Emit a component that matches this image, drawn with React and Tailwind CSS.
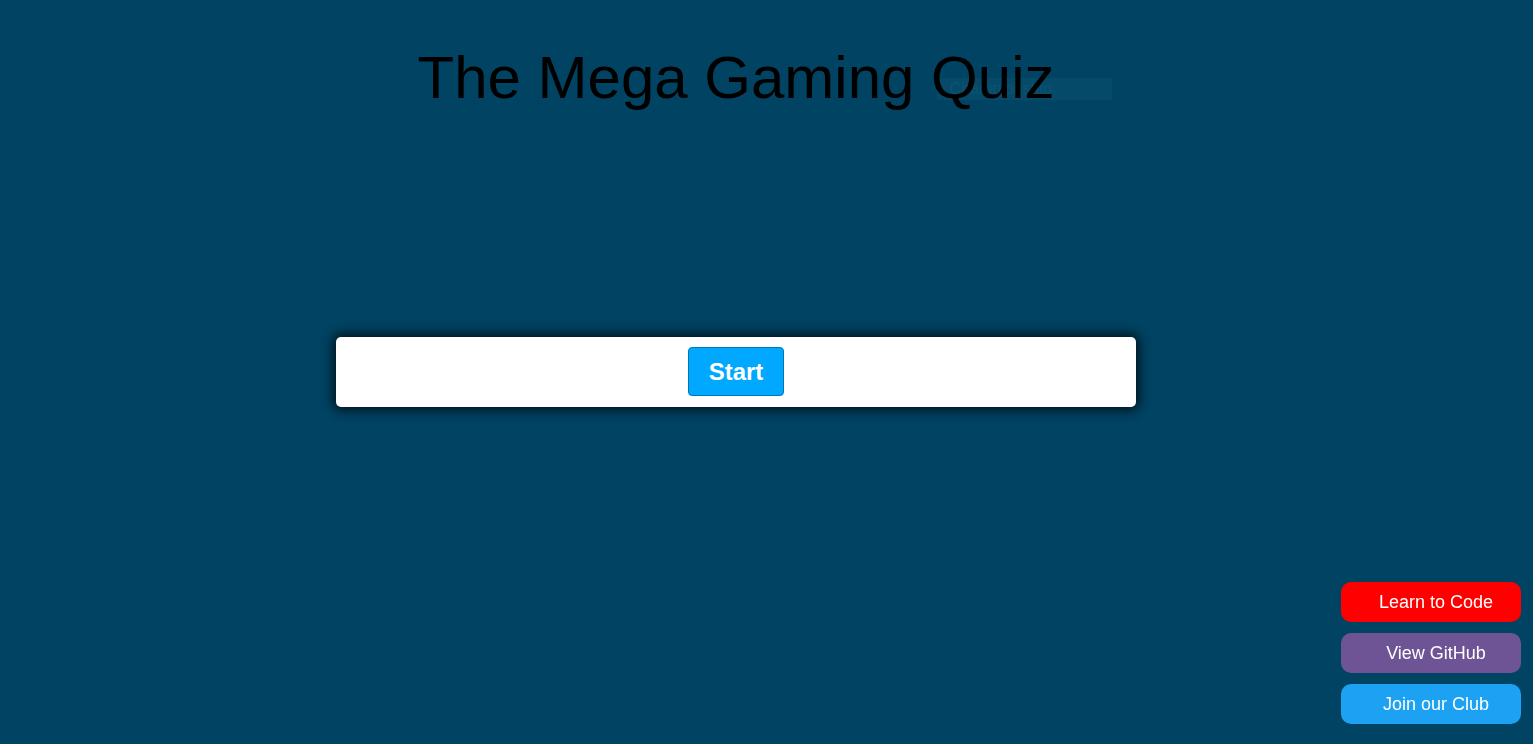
import React from "react";

export default function App() {
  return (
    <div
      className="relative w-full h-[744px] bg-[#004363] overflow-hidden"
      style={{ fontFamily: '"Liberation Sans", Arial, sans-serif' }}
    >
      <div className="w-[1472px] h-full flex flex-col items-center">
        <div className="relative mt-[43px] h-[69px] flex items-start">
          <div className="absolute left-[519px] top-[35px] w-[175px] h-[22px] bg-[#064a69] flex items-center pl-[13px] text-[16px] text-[#0b5373]">
            Championship
          </div>
          <h1 className="relative text-[60px] leading-[69px] text-black font-normal whitespace-nowrap">
            The Mega Gaming Quiz
          </h1>
        </div>
        <div className="mt-[225px] w-[800px] h-[70px] bg-white rounded-[5px] shadow-[0_0_12px_3px_rgba(0,0,0,0.75)] flex justify-center pt-[10px]">
          <button className="h-[49px] px-[20px] bg-[#00a8ff] border border-[#0277b5] rounded-[4px] text-white font-bold text-[24px] leading-[27px]">
            Start
          </button>
        </div>
      </div>
      <div className="fixed right-[12px] bottom-[20px] flex flex-col gap-[11px]">
        <a className="w-[180px] h-[40px] rounded-[10px] bg-[#ff0000] text-white text-[18px] flex items-center justify-center pl-[10px]">
          Learn to Code
        </a>
        <a className="w-[180px] h-[40px] rounded-[10px] bg-[#6e5494] text-white text-[18px] flex items-center justify-center pl-[10px]">
          View GitHub
        </a>
        <a className="w-[180px] h-[40px] rounded-[10px] bg-[#1da1f2] text-white text-[18px] flex items-center justify-center pl-[10px]">
          Join our Club
        </a>
      </div>
    </div>
  );
}
